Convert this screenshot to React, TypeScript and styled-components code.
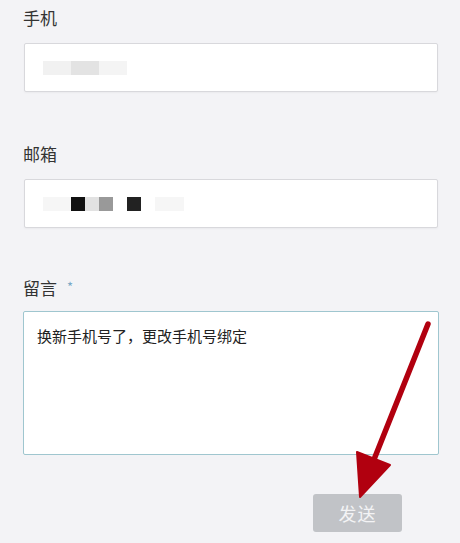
import styled, { createGlobalStyle } from "styled-components";

const GlobalStyle = createGlobalStyle`
  html, body {
    margin: 0;
    padding: 0;
    background: #f3f3f6;
  }
  body {
    font-family: "Noto Sans CJK SC", "Noto Sans", sans-serif;
  }
`;

const Page = styled.div`
  position: relative;
  width: 460px;
  height: 543px;
  box-sizing: border-box;
  padding: 6px 21px 0 23px;
  overflow: hidden;
`;

const Field = styled.div<{ $gap: number }>`
  display: flex;
  flex-direction: column;
  margin-bottom: ${(p) => p.$gap}px;
`;

const Label = styled.div<{ $space?: number }>`
  display: flex;
  align-items: center;
  height: 24px;
  font-size: 17px;
  line-height: 24px;
  color: #333;
  margin-bottom: ${(p) => p.$space ?? 13}px;
`;

const Star = styled.span`
  margin-left: 10px;
  font-size: 13px;
  color: #7aa8c6;
  position: relative;
  top: -1px;
`;

const InputBox = styled.div`
  display: flex;
  align-items: center;
  margin: 0 1px;
  height: 49px;
  box-sizing: border-box;
  padding-left: 18px;
  background: #fff;
  border: 1px solid #d8d8dc;
  border-radius: 2px;
  box-shadow: 0 1px 2px rgba(0, 0, 0, 0.04);
`;

const Mosaic = styled.div`
  display: flex;
  height: 14px;
`;

const Cell = styled.span<{ $color: string; $w?: number }>`
  display: block;
  width: ${(p) => p.$w ?? 14}px;
  height: 14px;
  background: ${(p) => p.$color};
`;

const TextArea = styled.textarea`
  display: block;
  width: 100%;
  height: 144px;
  box-sizing: border-box;
  padding: 13px 13px;
  border: 1px solid #9fc6cf;
  border-radius: 2px;
  background: #fff;
  font-family: "Noto Sans CJK SC", "Noto Sans", sans-serif;
  font-size: 15px;
  line-height: 22px;
  color: #222;
  resize: none;
  outline: none;
`;

const Actions = styled.div`
  display: flex;
  justify-content: flex-end;
  padding-right: 37px;
  margin-top: 39px;
`;

const SendButton = styled.button`
  width: 89px;
  height: 38px;
  border: none;
  border-radius: 3px;
  background: #c1c3c7;
  color: #f3f3f5;
  font-family: "Noto Sans CJK SC", "Noto Sans", sans-serif;
  font-size: 18px;
  letter-spacing: 1px;
  cursor: not-allowed;
`;

const Annotation = styled.svg`
  position: absolute;
  left: 0;
  top: 0;
  pointer-events: none;
`;

const phoneCells = ["#f1f1f1", "#f1f1f1", "#e3e3e3", "#e3e3e3", "#f4f4f4", "#f4f4f4"];
const emailCells = [
  "#f6f6f6",
  "#f6f6f6",
  "#111111",
  "#e2e2e2",
  "#999999",
  "#ffffff",
  "#222222",
  "#ffffff",
  "#f6f6f6",
  "#f6f6f6",
];

export default function App() {
  return (
    <>
      <GlobalStyle />
      <Page>
        <Field $gap={50}>
          <Label>手机</Label>
          <InputBox>
            <Mosaic>
              {phoneCells.map((c, i) => (
                <Cell key={i} $color={c} />
              ))}
            </Mosaic>
          </InputBox>
        </Field>
        <Field $gap={48}>
          <Label>邮箱</Label>
          <InputBox>
            <Mosaic>
              {emailCells.map((c, i) => (
                <Cell key={i} $color={c} $w={i === 9 ? 15 : 14} />
              ))}
            </Mosaic>
          </InputBox>
        </Field>
        <Field $gap={0}>
          <Label $space={11}>
            留言<Star>*</Star>
          </Label>
          <TextArea readOnly defaultValue="换新手机号了，更改手机号绑定" />
        </Field>
        <Actions>
          <SendButton>发送</SendButton>
        </Actions>
        <Annotation width="460" height="543" viewBox="0 0 460 543">
          <line
            x1="428"
            y1="324"
            x2="373"
            y2="462"
            stroke="#b1000f"
            strokeWidth="5.5"
            strokeLinecap="round"
          />
          <polygon
            points="357,452 390,465 360,497"
            fill="#b1000f"
            stroke="#b1000f"
            strokeWidth="2"
            strokeLinejoin="round"
          />
        </Annotation>
      </Page>
    </>
  );
}
